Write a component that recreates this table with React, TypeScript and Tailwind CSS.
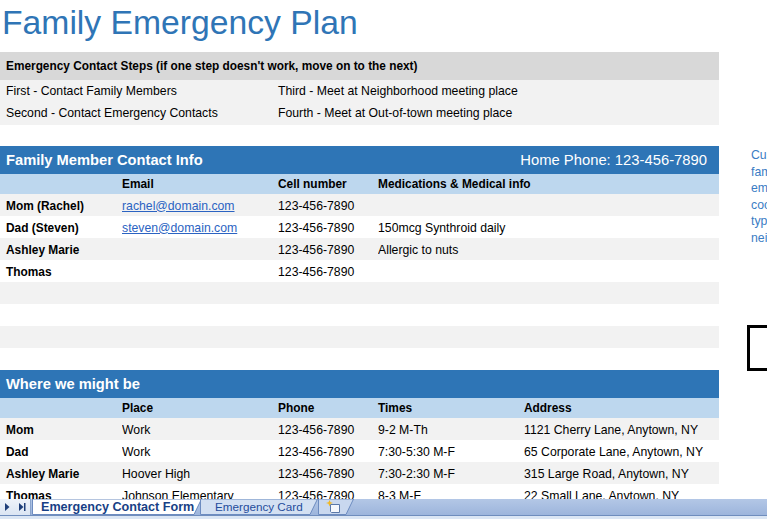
import React from "react";

const font = { fontFamily: '"Liberation Sans", Arial, sans-serif' };

function Row({ cols, cells, bg }: { cols: string; cells: React.ReactNode[]; bg: string }) {
  return (
    <div className={`grid ${cols} h-[22px] items-center pt-[1px] leading-[14px] text-[12.25px] text-black ${bg}`}>
      {cells.map((c, i) => (
        <div key={i} className={`h-[14px] whitespace-nowrap overflow-hidden ${i === 0 ? "pl-[6px] font-bold text-[11.9px]" : ""}`}>
          {c}
        </div>
      ))}
    </div>
  );
}

function Link({ children }: { children: React.ReactNode }) {
  return <span className="text-[#2b63c2] underline underline-offset-[1px]">{children}</span>;
}

const famCols = "grid-cols-[122px_156px_100px_1fr]";
const whereCols = "grid-cols-[122px_156px_100px_146px_1fr]";

function TabShape({ fill, stroke, w }: { fill: string; stroke: string; w: number }) {
  return (
    <svg className="absolute left-0 top-0" width={w + 8} height={16} viewBox={`0 0 ${w + 8} 16`}>
      <polygon points={`0.5,0 ${w + 7.5},0 ${w},15.5 0.5,15.5`} fill={fill} stroke={stroke} strokeWidth="1" />
    </svg>
  );
}

export default function App() {
  return (
    <div style={font} className="w-[767px] h-[519px] overflow-hidden bg-white flex flex-col">
      <div className="flex-1 min-h-0 overflow-hidden flex items-start">
        {/* Sheet content */}
        <div className="w-[719px] shrink-0">
          <div className="h-[52px] pt-[5px] pl-[2px] text-[33.7px] leading-[34px] text-[#2f75b6] whitespace-nowrap">
            Family Emergency Plan
          </div>

          {/* Steps */}
          <div className="h-[28px] bg-[#d8d8d8] flex items-center pl-[6px] pt-[1px] text-[11.85px] font-bold text-black">
            Emergency Contact Steps (if one step doesn't work, move on to the next)
          </div>
          <div className="bg-[#f2f2f2] pb-[1px]">
            <div className="grid grid-cols-[278px_1fr] h-[22px] items-center pt-[1px] text-[12.25px] text-black">
              <div className="pl-[6px]">First - Contact Family Members</div>
              <div>Third - Meet at Neighborhood meeting place</div>
            </div>
            <div className="grid grid-cols-[278px_1fr] h-[22px] items-center pt-[1px] text-[12.25px] text-black">
              <div className="pl-[6px]">Second - Contact Emergency Contacts</div>
              <div>Fourth - Meet at Out-of-town meeting place</div>
            </div>
          </div>

          <div className="h-[21px]" />

          {/* Family Member Contact Info */}
          <div className="h-[28px] bg-[#2e75b6] flex items-center justify-between pl-[6px] pr-[12px] pt-[1px] text-white">
            <span className="text-[14.7px] font-bold">Family Member Contact Info</span>
            <span className="text-[14.8px]">Home Phone: 123-456-7890</span>
          </div>
          <div className={`grid ${famCols} h-[20px] items-center pt-[1px] bg-[#bdd7ee] text-[11.9px] font-bold text-black`}>
            <div />
            <div>Email</div>
            <div>Cell number</div>
            <div>Medications &amp; Medical info</div>
          </div>
          <Row cols={famCols} bg="bg-[#f2f2f2]" cells={["Mom (Rachel)", <Link>rachel@domain.com</Link>, "123-456-7890", ""]} />
          <Row cols={famCols} bg="bg-white" cells={["Dad (Steven)", <Link>steven@domain.com</Link>, "123-456-7890", "150mcg Synthroid daily"]} />
          <Row cols={famCols} bg="bg-[#f2f2f2]" cells={["Ashley Marie", "", "123-456-7890", "Allergic to nuts"]} />
          <Row cols={famCols} bg="bg-white" cells={["Thomas", "", "123-456-7890", ""]} />
          <Row cols={famCols} bg="bg-[#f2f2f2]" cells={["", "", "", ""]} />
          <Row cols={famCols} bg="bg-white" cells={["", "", "", ""]} />
          <Row cols={famCols} bg="bg-[#f2f2f2]" cells={["", "", "", ""]} />
          <Row cols={famCols} bg="bg-white" cells={["", "", "", ""]} />

          {/* Where we might be */}
          <div className="h-[28px] bg-[#2e75b6] flex items-center pl-[6px] pt-[1px] text-white">
            <span className="text-[14.7px] font-bold">Where we might be</span>
          </div>
          <div className={`grid ${whereCols} h-[20px] items-center pt-[1px] bg-[#bdd7ee] text-[11.9px] font-bold text-black`}>
            <div />
            <div>Place</div>
            <div>Phone</div>
            <div>Times</div>
            <div>Address</div>
          </div>
          <Row cols={whereCols} bg="bg-[#f2f2f2]" cells={["Mom", "Work", "123-456-7890", "9-2 M-Th", "1121 Cherry Lane, Anytown, NY"]} />
          <Row cols={whereCols} bg="bg-white" cells={["Dad", "Work", "123-456-7890", "7:30-5:30 M-F", "65 Corporate Lane, Anytown, NY"]} />
          <Row cols={whereCols} bg="bg-[#f2f2f2]" cells={["Ashley Marie", "Hoover High", "123-456-7890", "7:30-2:30 M-F", "315 Large Road, Anytown, NY"]} />
          <Row cols={whereCols} bg="bg-white" cells={["Thomas", "Johnson Elementary", "123-456-7890", "8-3 M-F", "22 Small Lane, Anytown, NY"]} />
        </div>

        {/* Right side notes */}
        <div className="flex-1 min-w-0 pl-[28px]">
          <div className="mt-[147px] pl-[4px] text-[12.25px] leading-[16.5px] text-[#3a7cc4] whitespace-nowrap">
            <div>Customize</div>
            <div>family</div>
            <div>emergency</div>
            <div>coordinates</div>
            <div>type</div>
            <div>neighborhood</div>
          </div>
          <div className="mt-[79px] h-[46px] w-[40px] border-[3px] border-black" />
        </div>
      </div>

      {/* Sheet tab bar */}
      <div className="h-[20px] shrink-0 flex flex-col">
        <div className="h-[16px] flex bg-gradient-to-b from-[#b3c7e6] to-[#9db5dc]">
          <div className="w-[31px] h-full bg-gradient-to-b from-[#eef3fa] to-[#dbe5f3] border-r border-[#8aa4cc] flex items-center gap-[9px] pl-[5px]">
            <svg width="5" height="8" viewBox="0 0 5 8"><polygon points="0,0 4.5,4 0,8" fill="#1f3f7a" /></svg>
            <svg width="7" height="8" viewBox="0 0 7 8"><polygon points="0,0 4.5,4 0,8" fill="#1f3f7a" /><rect x="5" y="0" width="1.5" height="8" fill="#1f3f7a" /></svg>
          </div>
          <div className="relative w-[169px] h-full ml-[1px]">
            <TabShape w={162} fill="#ffffff" stroke="#6d8cc0" />
            <span className="relative z-10 block pl-[9px] leading-[16px] text-[12.6px] font-bold text-[#173f86] whitespace-nowrap">
              Emergency Contact Form
            </span>
          </div>
          <div className="relative w-[118px] h-full -ml-[1px]">
            <TabShape w={110} fill="#d3e0f2" stroke="#6d8cc0" />
            <span className="relative z-10 block pl-[15px] leading-[16px] text-[11.7px] text-[#1f4c9c] whitespace-nowrap">
              Emergency Card
            </span>
          </div>
          <div className="relative w-[36px] h-full">
            <TabShape w={28} fill="#c9d8ef" stroke="#6d8cc0" />
            <svg className="absolute left-[8px] top-[1px] z-10" width="16" height="14" viewBox="0 0 16 14">
              <path d="M4.5 4.5 H13.5 V12.5 H5.5 L4.5 11.5 Z" fill="#f4f7fc" stroke="#5a78a8" strokeWidth="1" />
              <polygon points="3.5,0 4.5,2.3 7,3 4.5,3.8 3.5,6.5 2.5,3.8 0,3 2.5,2.3" fill="#f2b820" />
            </svg>
          </div>
        </div>
        <div className="h-[1px] bg-[#6f8dbd]" />
        <div className="flex-1 bg-[#dbe6f4]" />
      </div>
    </div>
  );
}
